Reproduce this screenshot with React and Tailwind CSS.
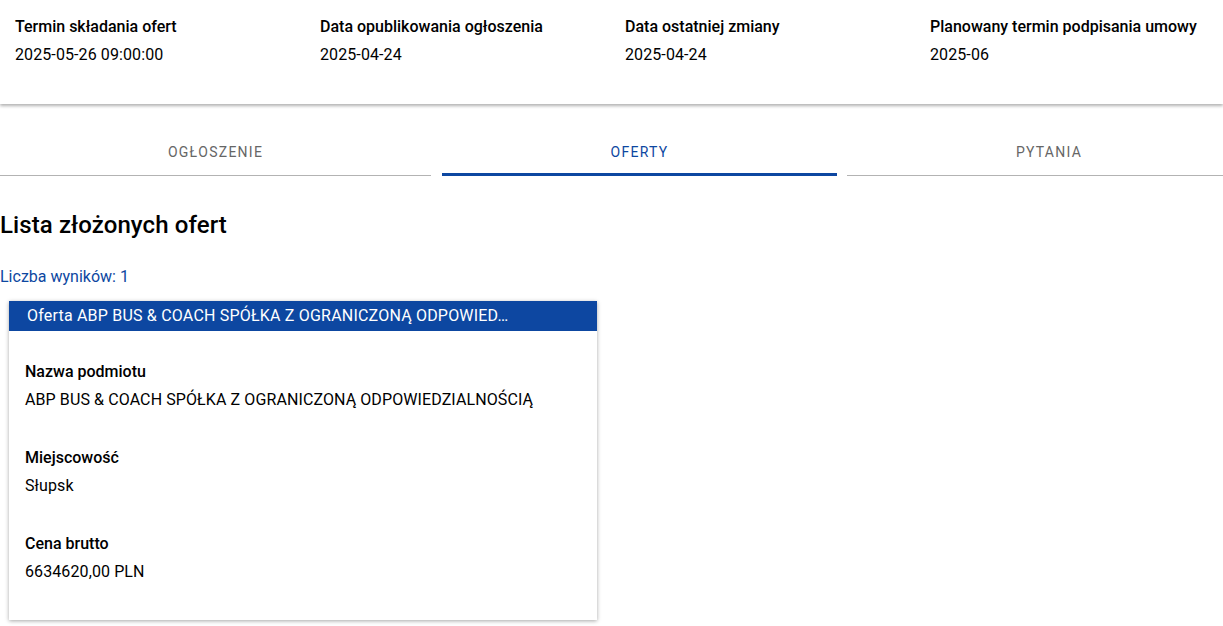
const meta = [
  { label: 'Termin składania ofert', value: '2025-05-26 09:00:00' },
  { label: 'Data opublikowania ogłoszenia', value: '2025-04-24' },
  { label: 'Data ostatniej zmiany', value: '2025-04-24' },
  { label: 'Planowany termin podpisania umowy', value: '2025-06' },
];

const fields = [
  { label: 'Nazwa podmiotu', value: 'ABP BUS & COACH SPÓŁKA Z OGRANICZONĄ ODPOWIEDZIALNOŚCIĄ' },
  { label: 'Miejscowość', value: 'Słupsk' },
  { label: 'Cena brutto', value: '6634620,00 PLN' },
];

const App = () => {
  return (
    <div className="min-h-screen bg-white text-[#1b1b1b] font-['Roboto',sans-serif] overflow-hidden">
      {/* Header with dates */}
      <div className="grid grid-cols-[305px_305px_305px_1fr] h-[104px] shadow-[0_2px_3px_rgba(0,0,0,0.3)] pt-[17px]">
        {meta.map((m) => (
          <div key={m.label} className="px-[15px]">
            <div className="text-[16px] font-medium leading-[20px] text-black">{m.label}</div>
            <div className="text-[16px] leading-[20px] mt-[8px] text-black tracking-[0.1px]">{m.value}</div>
          </div>
        ))}
      </div>

      {/* Tabs */}
      <div className="flex mt-[24px] overflow-hidden">
        <div className="w-[431px] shrink-0 h-[48px] flex items-center justify-center border-b border-[#b3b3b3] text-[14px] tracking-[1.25px] text-[#666] pt-[1px]">
          OGŁOSZENIE
        </div>
        <div className="w-[395px] shrink-0 ml-[11px] h-[48px] flex items-center justify-center border-b-[3px] border-[#0d47a1] text-[14px] tracking-[1.25px] text-[#0d47a1] pt-[3px]">
          OFERTY
        </div>
        <div className="w-[404px] shrink-0 ml-[10px] h-[48px] flex items-center justify-center border-b border-[#b3b3b3] text-[14px] tracking-[1.25px] text-[#666] pt-[1px]">
          PYTANIA
        </div>
      </div>

      {/* Offers list */}
      <h2 className="text-[24px] font-medium leading-[30px] text-black mt-[34px] tracking-[0.1px]">Lista złożonych ofert</h2>
      <div className="text-[16px] text-[#0d47a1] mt-[27px] leading-[20px]">Liczba wyników: 1</div>

      <div className="w-[588px] ml-[9px] mt-[14px] bg-white shadow-[0_1px_4px_rgba(0,0,0,0.35)]">
        <div className="h-[30px] bg-[#0d47a1] text-white text-[16px] flex items-center px-[18px] tracking-[0.2px]">
          <span className="whitespace-nowrap">Oferta ABP BUS &amp; COACH SPÓŁKA Z OGRANICZONĄ ODPOWIED…</span>
        </div>
        <div className="px-[16px] pt-[31px] pb-[38px] flex flex-col gap-[38px]">
          {fields.map((f) => (
            <div key={f.label}>
              <div className="text-[16px] font-medium leading-[20px] text-black">{f.label}</div>
              <div className="text-[16px] leading-[20px] mt-[8px] text-black tracking-[0.1px]">{f.value}</div>
            </div>
          ))}
        </div>
      </div>
    </div>
  );
};

export default App;
